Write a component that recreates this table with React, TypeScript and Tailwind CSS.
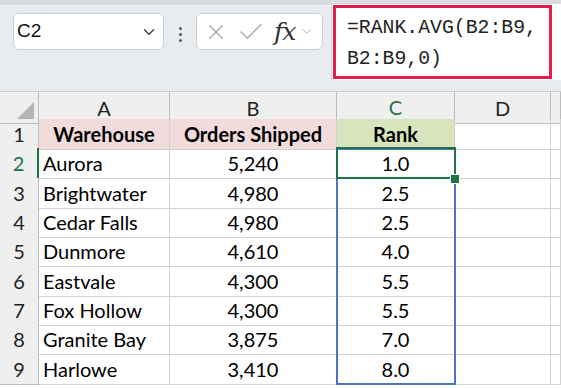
import { ChevronDown, X, Check } from "lucide-react";

type Row = { name: string; orders: string; rank: string };

const rows: Row[] = [
    { name: "Aurora", orders: "5,240", rank: "1.0" },
    { name: "Brightwater", orders: "4,980", rank: "2.5" },
    { name: "Cedar Falls", orders: "4,980", rank: "2.5" },
    { name: "Dunmore", orders: "4,610", rank: "4.0" },
    { name: "Eastvale", orders: "4,300", rank: "5.5" },
    { name: "Fox Hollow", orders: "4,300", rank: "5.5" },
    { name: "Granite Bay", orders: "3,875", rank: "7.0" },
    { name: "Harlowe", orders: "3,410", rank: "8.0" },
];

const cols = "grid grid-cols-[39px_131px_167px_118px_96px_1fr]";
const cell = "border-r border-b border-[#d2d2d2] flex items-center";
const head = "border-r border-b border-[#bdbdbd] bg-[#efefef] flex items-center justify-center text-[#222]";

function Toolbar() {
    return (
        <div className="h-[91px] bg-[#e8ebef] relative">
            <div className="h-[3px] bg-[#d9dde2] shadow-[0_1px_2px_rgba(0,0,0,0.12)]" />
            <div className="flex items-start">
                <div className="ml-[13px] mt-[10px] w-[151px] h-[37px] rounded-[6px] border border-[#cdd0d4] bg-white flex items-center pl-[3px] pr-[5px]">
                    <span className="flex-1 text-[19px] text-[#111] font-['Liberation_Sans',sans-serif]">C2</span>
                    <ChevronDown className="w-[18px] h-[18px] text-[#444]" strokeWidth={2} />
                </div>
                <div className="w-[32px] mt-[24px] flex flex-col items-center gap-[3px]">
                    <span className="w-[3px] h-[3px] bg-[#555] rounded-full" />
                    <span className="w-[3px] h-[3px] bg-[#555] rounded-full" />
                    <span className="w-[3px] h-[3px] bg-[#555] rounded-full" />
                </div>
                <div className="mt-[10px] w-[127px] h-[37px] rounded-[6px] border border-[#cdd0d4] bg-white flex items-center pl-[6px]">
                    <X className="w-[26px] h-[26px] text-[#a8a8a8]" strokeWidth={1.1} />
                    <Check className="w-[30px] h-[30px] ml-[7px] text-[#a8a8a8]" strokeWidth={1.1} />
                    <span className="ml-[8px] text-[25px] italic text-[#333] font-['DejaVu_Serif',serif] leading-none tracking-[-1px]">fx</span>
                    <ChevronDown className="w-[15px] h-[15px] ml-[4px] text-[#aaa]" strokeWidth={1.5} />
                </div>
                <div className="ml-[8px] mt-[1px] flex-1 h-[76px] bg-white border-l border-[#d4d7db]">
                    <div className="ml-[1px] mt-[1px] w-[219px] h-[74px] border-[3px] border-[#e11d48] pl-[11px] pt-[5px] font-['Liberation_Mono',monospace] text-[19.8px] leading-[31px] text-[#222]">
                        <div>=RANK.AVG(B2:B9,</div>
                        <div>B2:B9,0)</div>
                    </div>
                </div>
            </div>
        </div>
    );
}

export default function App() {
    return (
        <div className="w-[561px] h-[388px] overflow-hidden bg-white font-['Lato',sans-serif] text-[20px] text-black">
            <Toolbar />
            <div className="relative">
                <div className={`${cols} h-[28px] border-t border-[#c9c9c9]`}>
                    <div className={`${head} relative`}>
                        <svg className="absolute right-[4px] bottom-[4px]" width="17" height="17" viewBox="0 0 17 17">
                            <polygon points="17,0 17,17 0,17" fill="#b4b4b4" />
                        </svg>
                    </div>
                    <div className={head}>A</div>
                    <div className={head}>B</div>
                    <div className={`${head} bg-[#d4d4d4] text-[#217346] border-b-2 border-b-[#217346]`}>C</div>
                    <div className={head}>D</div>
                    <div className={head} />
                </div>
                <div className={`${cols} h-[29.33px]`}>
                    <div className={head}>1</div>
                    <div className={`${cell} bg-[#f2dcdb] justify-center font-bold`}>Warehouse</div>
                    <div className={`${cell} bg-[#f2dcdb] justify-center font-bold`}>Orders Shipped</div>
                    <div className={`${cell} bg-[#d8e4bc] justify-center font-bold`}>Rank</div>
                    <div className={cell} />
                    <div className={cell} />
                </div>
                {rows.map((row, i) => (
                    <div key={row.name} className={`${cols} h-[29.33px]`}>
                        <div
                            className={
                                i === 0
                                    ? `${head} bg-[#d4d4d4] text-[#217346] border-r-2 border-r-[#217346]`
                                    : head
                            }
                        >
                            {i + 2}
                        </div>
                        <div className={`${cell} pl-[4px]`}>{row.name}</div>
                        <div className={`${cell} justify-center`}>{row.orders}</div>
                        <div className={`${cell} justify-center`}>{row.rank}</div>
                        <div className={cell} />
                        <div className={cell} />
                    </div>
                ))}
                {/* selection range C2:C9 */}
                <div className="absolute left-[336px] top-[57px] w-[120px] h-[237px] border-2 border-[#4a74c6] pointer-events-none" />
                <div className="absolute left-[336px] top-[56px] w-[120px] h-[32px] border-[2.5px] border-[#217346] pointer-events-none" />
                <div className="absolute left-[451px] top-[84px] w-[8px] h-[8px] bg-[#217346] outline outline-1 outline-white pointer-events-none" />
            </div>
        </div>
    );
}
